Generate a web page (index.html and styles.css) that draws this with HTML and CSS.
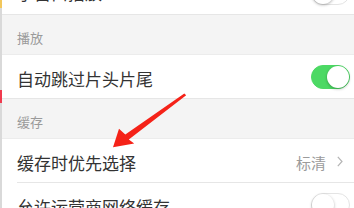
FILE: index.html
```html
<!DOCTYPE html>
<html lang="zh-CN">
<head>
  <meta charset="UTF-8">
  <title>设置</title>
  <meta name="viewport" content="width=device-width, initial-scale=1.0">
  <link rel="stylesheet" href="styles.css">
</head>
<body>
  <div class="edge"></div>
  <div class="settings">
    <div class="row first">
      <span class="label">小窗口播放</span>
      <span class="switch"></span>
    </div>

    <div class="section">播放</div>
    <div class="row">
      <span class="label">自动跳过片头片尾</span>
      <span class="switch on"></span>
    </div>

    <div class="section">缓存</div>
    <div class="row inset">
      <span class="label">缓存时优先选择</span>
      <span class="value">标清</span>
      <svg class="chevron" width="6" height="11" viewBox="0 0 6 11">
        <path d="M0.8 0.8 L5 5.5 L0.8 10.2" fill="none" stroke="#b4b4b4" stroke-width="1.2"/>
      </svg>
    </div>
    <div class="row">
      <span class="label">允许运营商网络缓存</span>
      <span class="switch"></span>
    </div>
  </div>

  <!-- annotation arrow drawn over the screenshot -->
  <svg class="arrow" width="354" height="208" viewBox="0 0 354 208">
    <polygon points="184.3,93.4 186.2,95.2 128.8,139.6 134.2,143.4 113,147.2 119,128.8 125.3,134.5" fill="#f52218"/>
  </svg>
</body>
</html>
```

FILE: styles.css
```css
body {
  margin: 0;
  width: 354px;
  height: 208px;
  overflow: hidden;
  display: flex;
  background: #f4f4f4;
  font-family: "Noto Sans CJK SC", "Noto Sans", sans-serif;
  color: #333;
}

.edge {
  width: 2px;
  flex-shrink: 0;
  background: linear-gradient(to bottom, #f2c75c 0 8px, #d9d9d9 8px 90px, #f03a4e 90px 103px, #d9d9d9 103px);
}

.settings {
  flex: 1;
  margin-top: -29px;
}

.row {
  height: 43px;
  display: flex;
  align-items: center;
  padding: 0 4px 0 15px;
  background: #fff;
  border-bottom: 1px solid #e6e6e6;
  position: relative;
}

.row.inset {
  border-bottom: none;
  height: 44px;
  padding-right: 11px;
}

.row.inset::after {
  content: "";
  position: absolute;
  left: 15px;
  right: 0;
  bottom: 0;
  height: 1px;
  background: #e6e6e6;
}

.label {
  flex: 1;
  font-size: 17px;
  padding-top: 3px;
}

.row.first .label {
  padding-top: 0;
}

.section {
  display: flex;
  align-items: flex-end;
  padding: 0 15px 7px;
  box-sizing: border-box;
  height: 40px;
  font-size: 13px;
  color: #9a9a9a;
  border-bottom: 1px solid #ececec;
}

.value {
  font-size: 15px;
  color: #9b9b9b;
  margin-right: 11px;
  padding-top: 2px;
}

.chevron {
  display: block;
}

.switch {
  width: 39px;
  height: 24px;
  border-radius: 12px;
  box-sizing: border-box;
  border: 1px solid #e4e4e4;
  background: #fff;
  position: relative;
}

.switch::after {
  content: "";
  position: absolute;
  top: 0;
  left: 0;
  width: 22px;
  height: 22px;
  border-radius: 50%;
  background: #fff;
  box-shadow: 0 1px 3px rgba(0, 0, 0, 0.3);
}

.switch.on {
  background: #4cd964;
  border-color: #4cd964;
}

.switch.on::after {
  left: auto;
  right: 0;
}

.arrow {
  position: absolute;
  left: 0;
  top: 0;
}
```
